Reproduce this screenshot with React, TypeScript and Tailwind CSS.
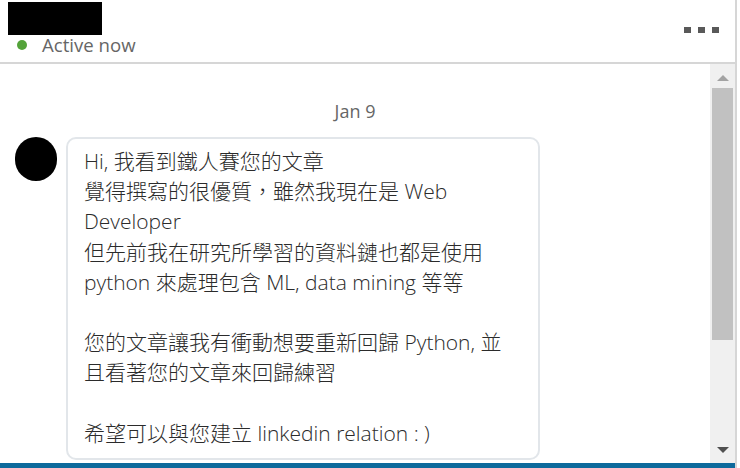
const FONT = 'font-["Open_Sans","Noto_Sans_CJK_TC",sans-serif]'

const LINES = [
  'Hi, 我看到鐵人賽您的文章',
  '覺得撰寫的很優質，雖然我現在是 Web',
  'Developer',
  '但先前我在研究所學習的資料鏈也都是使用',
  'python 來處理包含 ML, data mining 等等',
  '',
  '您的文章讓我有衝動想要重新回歸 Python, 並',
  '且看著您的文章來回歸練習',
  '',
  '希望可以與您建立 linkedin relation : )',
]

function Scrollbar() {
  return (
    <div className="w-[25px] bg-[#f0f0f0] flex flex-col items-center">
      <div className="h-[24px] flex items-center justify-center pt-[3px]">
        <div className="w-0 h-0 border-l-[6px] border-r-[6px] border-b-[6px] border-l-transparent border-r-transparent border-b-[#a3a3a3]" />
      </div>
      <div className="w-[21px] h-[252px] bg-[#c1c1c1]" />
      <div className="flex-1" />
      <div className="h-[24px] flex items-center justify-center pb-[2px]">
        <div className="w-0 h-0 border-l-[6px] border-r-[6px] border-t-[6px] border-l-transparent border-r-transparent border-t-[#505050]" />
      </div>
    </div>
  )
}

function App() {
  return (
    <div className={`w-[740px] h-[468px] flex bg-white overflow-hidden ${FONT}`}>
      <div className="w-[737px] flex flex-col border-r-2 border-[#d6d6d6]">
        <header className="h-[62px] flex justify-between shrink-0">
          <div className="pl-[8px] pt-[2px]">
            <div className="w-[94px] h-[33px] bg-black" />
            <div className="flex items-center gap-[15px] pl-[9px]">
              <span className="w-[10px] h-[10px] rounded-full bg-[#54a33a]" />
              <span className="text-[18.6px] leading-[20px] text-[#666666]">Active now</span>
            </div>
          </div>
          <div className="flex gap-[7px] pr-[16px] pt-[27px]">
            <span className="w-[7px] h-[6px] bg-[#595959]" />
            <span className="w-[7px] h-[6px] bg-[#595959]" />
            <span className="w-[7px] h-[6px] bg-[#595959]" />
          </div>
        </header>
        <div className="flex-1 flex border-t-2 border-[#d6d6d6] min-h-0">
          <main className="flex-1 flex flex-col">
            <div className="pt-[35px] h-[73px] text-center text-[18px] leading-[24px] text-[#666666]">Jan 9</div>
            <div className="flex items-start pl-[15px] gap-[9px]">
              <div className="w-[42px] h-[44px] rounded-full bg-black shrink-0" />
              <div className="w-[474px] h-[323px] border-2 border-[#e2e6ea] rounded-[10px] pl-[16px] pt-[7px] text-[21px] leading-[30.2px] font-light text-[#2b2b2b]">
                {LINES.map((line, i) => (
                  <div key={i} className="h-[30.2px] whitespace-nowrap">{line}</div>
                ))}
              </div>
            </div>
          </main>
          <Scrollbar />
        </div>
        <div className="h-[5px] bg-[#0d6a9c] shrink-0" />
      </div>
    </div>
  )
}

export default App
